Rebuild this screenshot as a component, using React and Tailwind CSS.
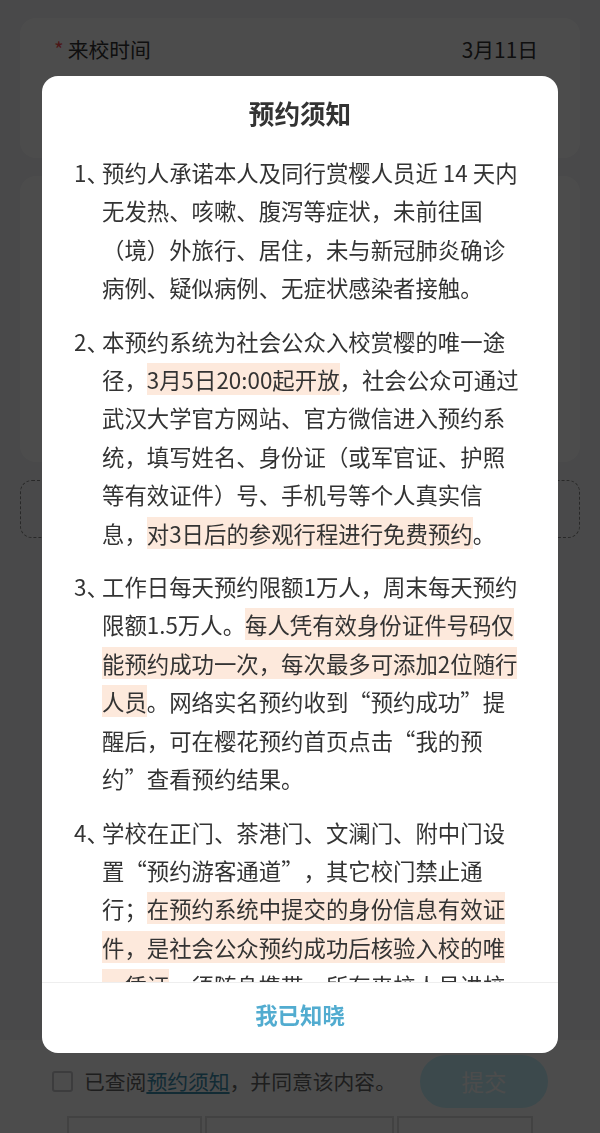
import React from 'react';

// notice items: each is a list of [text, highlighted]
const NOTICE = [
    [
        ['预约人承诺本人及同行赏樱人员近 14 天内无发热、咳嗽、腹泻等症状，未前往国（境）外旅行、居住，未与新冠肺炎确诊病例、疑似病例、无症状感染者接触。', false],
    ],
    [
        ['本预约系统为社会公众入校赏樱的唯一途径，', false],
        ['3月5日20:00起开放', true],
        ['，社会公众可通过武汉大学官方网站、官方微信进入预约系统，填写姓名、身份证（或军官证、护照等有效证件）号、手机号等个人真实信息，', false],
        ['对3日后的参观行程进行免费预约', true],
        ['。', false],
    ],
    [
        ['工作日每天预约限额1万人，周末每天预约限额1.5万人。', false],
        ['每人凭有效身份证件号码仅能预约成功一次，每次最多可添加2位随行人员', true],
        ['。网络实名预约收到“预约成功”提醒后，可在樱花预约首页点击“我的预约”查看预约结果。', false],
    ],
    [
        ['学校在正门、茶港门、文澜门、附中门设置“预约游客通道”，其它校门禁止通行；', false],
        ['在预约系统中提交的身份信息有效证件，是社会公众预约成功后核验入校的唯一凭证', true],
        ['，须随身携带，所有来校人员进校时须主动出示，配合工作人员查验。', false],
    ],
];

// curly quotes get their full-width glyphs
const withQuotes = (text) =>
    text.split(/([“”])/).map((part, k) =>
        part === '“' || part === '”'
            ? <span key={k} className="[font-feature-settings:'fwid']">{part}</span>
            : part
    );

const NoticeModal = () => (
    <div className="fixed inset-0 bg-black/70 flex justify-center px-[42px] pt-[76px]">
        <div className="w-full h-[977px] bg-white rounded-[16px] flex flex-col overflow-hidden">
            <div className="h-[75px] shrink-0 flex items-center justify-center">
                <h2 className="text-[25.6px] font-bold text-[#333]">预约须知</h2>
            </div>
            {/* scrolling body, cut by the footer */}
            <div className="flex-1 overflow-hidden px-[32px] pt-[2px] text-[22.4px] leading-[38.4px] text-[#333] [text-spacing-trim:space-all]">
                {NOTICE.map((item, i) => (
                    <div key={i} className="flex mb-[15px]">
                        <span className="w-[28px] shrink-0 whitespace-nowrap">{i + 1}、</span>
                        <p className="w-[424px] break-all">
                            {item.map(([text, hl], j) => (
                                <span key={j} className={hl ? 'bg-[#fde9dc]' : ''}>{withQuotes(text)}</span>
                            ))}
                        </p>
                    </div>
                ))}
            </div>
            <div className="h-[71px] shrink-0 border-t border-[#eeeeee] flex items-center justify-center pb-[6px]">
                <button className="text-[22.4px] font-bold text-[#52acd0]">我已知晓</button>
            </div>
        </div>
    </div>
);

export default function App() {
    return (
        <div lang="zh-CN" className="h-[1133px] overflow-hidden bg-[#f5f6f7] flex flex-col" style={{ fontFamily: '"Noto Sans CJK SC", "Noto Sans", sans-serif' }}>
            <div className="px-[20px] pt-[18px] flex flex-col">
                <div className="h-[140px] bg-white rounded-[16px] pl-[34px] pr-[42px] pt-[12px]">
                    <div className="flex items-center justify-between h-[40px] text-[20.8px] text-[#333]">
                        <span><span className="text-[#ff4d4f] mr-[4px]">*</span>来校时间</span>
                        <span>3月11日</span>
                    </div>
                </div>
                <div className="h-[286px] mt-[18px] bg-white rounded-[16px]"></div>
                <div className="h-[58px] mt-[18px] border border-dashed border-[#888888] rounded-[12px]"></div>
            </div>
            <div className="flex-1"></div>
            {/* bottom bar */}
            <div className="h-[81px] shrink-0 bg-white flex flex-col">
                <div className="flex items-center justify-between pl-[52px] pr-[52px] pt-[15px]">
                    <div className="flex items-center gap-[11px] text-[20.8px] text-[#666]">
                        <span className="w-[21px] h-[21px] border-2 border-[#c8c9cc] rounded-[3px]"></span>
                        <span>已查阅<span className="text-[#3d8fb0] underline">预约须知</span>，并同意该内容。</span>
                    </div>
                    <button className="w-[128px] h-[53px] rounded-full bg-[#c8f5ff] text-[22.4px] text-white">提交</button>
                </div>
            </div>
            <div className="flex px-[67px] gap-[3px] h-[20px] shrink-0 bg-white -mt-[8px] pt-[3px]">
                <div className="w-[135px] border-2 border-b-0 border-[#dddddd]"></div>
                <div className="w-[189px] border-2 border-b-0 border-[#dddddd]"></div>
                <div className="w-[136px] border-2 border-b-0 border-[#dddddd]"></div>
            </div>
            <NoticeModal />
        </div>
    );
}
